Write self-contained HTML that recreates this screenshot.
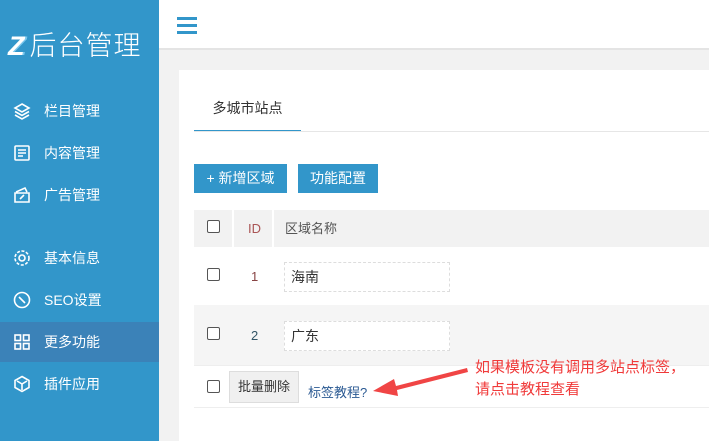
<!DOCTYPE html>
<html><head><meta charset="utf-8"><style>
*{margin:0;padding:0;box-sizing:border-box}
body{width:709px;height:441px;overflow:hidden;background:#f2f2f2;font-family:"Liberation Sans","Noto Sans CJK SC",sans-serif;position:relative}
.side{position:absolute;left:0;top:0;width:159px;height:441px;background:#3296ca;color:#fff}
.logo{position:absolute;left:8px;top:24px;font-size:27px;letter-spacing:1px;color:#fff;font-weight:300}
.logo b{font-style:italic;color:#fff;font-weight:900;margin-right:4px;text-shadow:2px 0 #7cc8ee}
.item{position:absolute;left:0;width:159px;height:40px;font-size:14px;line-height:40px;padding-left:44px}
.item svg{position:absolute;left:13px;top:11px;width:18px;height:18px;fill:none;stroke:#fff;stroke-width:1.6}
.sel{background:#3b82b8}
.top{position:absolute;left:159px;top:0;right:0;height:50px;background:#fff;border-bottom:2px solid #e4e4e4}
.ham{position:absolute;left:18px;top:17px;width:20px}
.ham i{display:block;height:3px;background:#3296ca;margin-bottom:4px}
.card{position:absolute;left:179px;top:70px;width:530px;height:371px;background:#fff}
.tab{position:absolute;left:15px;top:28px;width:107px;height:34px;font-size:14px;color:#333;text-align:center;border-bottom:2px solid #3296ca}
.tabline{position:absolute;left:15px;right:0;top:61px;border-top:1px solid #e6e6e6}
.btn{position:absolute;top:94px;height:29px;background:#3296ca;color:#fff;font-size:14px;line-height:29px;text-align:center}
.th{position:absolute;top:140px;height:37px;background:#f2f2f2;font-size:13px;color:#555;line-height:37px}
.cb{position:absolute;width:13px;height:13px;border:1.5px solid #555;border-radius:2px;background:#fff}
.row2{position:absolute;left:15px;right:0;top:235px;height:60px;background:#f5f5f5}
.inp{position:absolute;left:105px;width:166px;height:30px;border:1px dashed #ddd;background:#fff;font-size:14px;color:#333;line-height:28px;padding-left:6px}
.num{position:absolute;left:72px;font-size:13px}
.note{position:absolute;left:475px;top:357px;color:#f03a3a;font-size:15px;line-height:22px}
</style></head><body>
<div class="side">
<div class="logo"><b>Z</b>后台管理</div>
<div class="item" style="top:91px"><svg viewBox="0 0 18 18"><path d="M9 2 16 6 9 10 2 6Z M2 9.5 9 13.5 16 9.5 M2 13 9 17 16 13"/></svg>栏目管理</div>
<div class="item" style="top:133px"><svg viewBox="0 0 18 18"><rect x="2" y="2" width="14" height="14" rx="1"/><path d="M5 6h8M5 9h8M5 12h5"/></svg>内容管理</div>
<div class="item" style="top:175px"><svg viewBox="0 0 18 18"><path d="M3 6 12 2 14 6 M2 7h14v9H2Z M7 13l4-4"/></svg>广告管理</div>
<div class="item" style="top:238px"><svg viewBox="0 0 18 18"><circle cx="9" cy="9" r="3"/><circle cx="9" cy="9" r="7" stroke-dasharray="3 1.6"/></svg>基本信息</div>
<div class="item" style="top:280px"><svg viewBox="0 0 18 18"><circle cx="9" cy="9" r="7.5"/><path d="M6 6l6 6"/></svg>SEO设置</div>
<div class="item sel" style="top:322px"><svg viewBox="0 0 18 18"><rect x="2" y="2" width="5.5" height="5.5"/><rect x="10.5" y="2" width="5.5" height="5.5"/><rect x="2" y="10.5" width="5.5" height="5.5"/><rect x="10.5" y="10.5" width="5.5" height="5.5"/></svg>更多功能</div>
<div class="item" style="top:364px"><svg viewBox="0 0 18 18"><path d="M9 1.5 16 5.5v7L9 16.5 2 12.5v-7Z M4 6l5 3 5-3 M9 9v6"/></svg>插件应用</div>
</div>
<div class="top"><div class="ham"><i></i><i></i><i></i></div></div>
<div class="card">
<div class="tab">多城市站点</div><div class="tabline"></div>
<div class="btn" style="left:15px;width:93px">+ 新增区域</div>
<div class="btn" style="left:119px;width:80px">功能配置</div>
<div class="th" style="left:15px;width:38px"></div>
<div class="th" style="left:55px;width:38px;padding-left:14px;color:#a55">ID</div>
<div class="th" style="left:95px;right:0;padding-left:11px">区域名称</div>
<div class="cb" style="left:28px;top:150px"></div>
<div class="cb" style="left:28px;top:198px"></div>
<div class="num" style="top:199px;color:#844">1</div>
<div class="inp" style="top:192px">海南</div>
<div class="row2"></div>
<div class="cb" style="left:28px;top:257px"></div>
<div class="num" style="top:258px;color:#356">2</div>
<div class="inp" style="top:251px">广东</div>
<div style="position:absolute;left:15px;right:0;top:295px;border-top:1px solid #eee"></div>
<div class="cb" style="left:28px;top:310px"></div>
<div style="position:absolute;left:50px;top:301px;width:70px;height:32px;background:#f0f0f0;border:1px solid #ddd;font-size:13px;color:#333;line-height:30px;text-align:center">批量删除</div>
<div style="position:absolute;left:129px;top:312px;font-size:13px;color:#2b5a93">标签教程?</div>
<div style="position:absolute;left:15px;right:0;top:337px;border-top:1px solid #eee"></div>
</div>
<svg style="position:absolute;left:370px;top:366px" width="100" height="34"><path d="M97 2 L26 20 L24 13 L3 25 L28 30 L27 24 L98 6Z" fill="#f04545"/></svg>
<div class="note">如果模板没有调用多站点标签，<br>请点击教程查看</div>
</body></html>
